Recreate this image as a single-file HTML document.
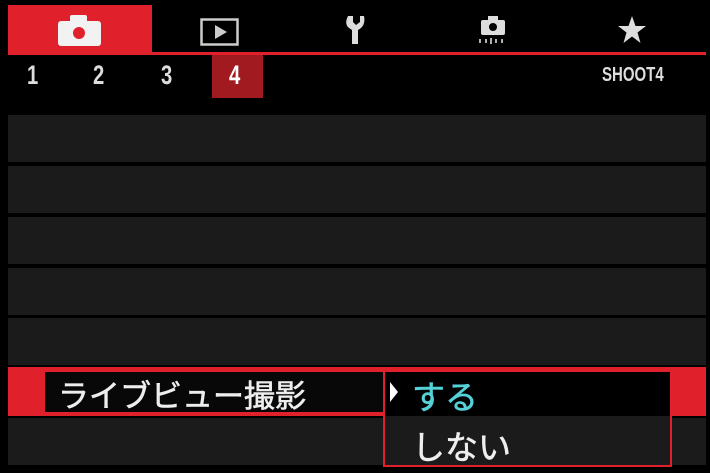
<!DOCTYPE html><html><head><style>
body{margin:0;width:710px;height:473px;background:#000;position:relative;overflow:hidden;font-family:"Liberation Sans","Noto Sans CJK JP",sans-serif;color:#eee}
div{position:absolute}
.row{left:8px;width:698px;height:47px;background:#1b1b1b}
.n{top:60px;font-size:27px;font-weight:bold;color:#ddd;transform:scaleX(.75);transform-origin:left}
</style></head><body>
<div style="left:8px;top:5px;width:144px;height:48px;background:#e0202a"></div>
<div style="left:8px;top:52px;width:698px;height:3px;background:#e0202a"></div>
<svg style="position:absolute;left:58px;top:14px" width="44" height="33"><rect x="0" y="7" width="43" height="25" rx="3" fill="#f2f2f2"/><rect x="12" y="1" width="17" height="9" rx="2" fill="#f2f2f2"/><circle cx="21" cy="19" r="6" fill="#e0202a"/></svg>
<svg style="position:absolute;left:200px;top:18px" width="40" height="28"><rect x="1.5" y="1.5" width="36" height="25" fill="none" stroke="#ccc" stroke-width="2.5"/><path d="M15 7 L27 14 L15 21Z" fill="#ccc"/></svg>
<svg style="position:absolute;left:344px;top:14px" width="26" height="32"><path d="M4 2 Q0 10 5 14 L8 16 L8 30 L14 30 L14 16 Q22 12 20 2 L16 2 L16 8 L12 11 L9 8 L9 2Z" fill="#ddd"/></svg>
<svg style="position:absolute;left:477px;top:14px" width="34" height="32"><rect x="4" y="6" width="24" height="15" rx="2" fill="#ddd"/><rect x="11" y="2" width="10" height="6" fill="#ddd"/><circle cx="16" cy="13" r="4" fill="#000"/><path d="M3 25v4M9 25v4M14 24v6M19 25v4M25 25v4" stroke="#ddd" stroke-width="1.6"/></svg>
<svg style="position:absolute;left:617px;top:15px" width="30" height="30"><path d="M15 1 L18.5 11 L29 11 L20.5 17.5 L23.5 28 L15 21.5 L6.5 28 L9.5 17.5 L1 11 L11.5 11Z" fill="#ddd"/></svg>
<div style="left:212px;top:55px;width:51px;height:43px;background:#a01a20"></div>
<div class="n" style="left:27px">1</div>
<div class="n" style="left:93px">2</div>
<div class="n" style="left:161px">3</div>
<div class="n" style="left:229px;color:#fff">4</div>
<div style="left:602px;top:64px;font-size:20px;font-weight:bold;color:#ddd;transform:scaleX(.75);transform-origin:left">SHOOT4</div>
<div class="row" style="top:115px"></div>
<div class="row" style="top:166px"></div>
<div class="row" style="top:217px"></div>
<div class="row" style="top:268px"></div>
<div class="row" style="top:318px"></div>
<div class="row" style="top:418px"></div>
<div style="left:8px;top:367px;width:698px;height:49px;background:#e0202a"></div>
<div style="left:45px;top:372px;width:340px;height:40px;background:#080808"></div>
<div style="left:383px;top:370px;width:285px;height:93px;border:2px solid #e0202a;background:#1b1b1b"></div>
<div style="left:385px;top:372px;width:285px;height:44px;background:#000"></div>
<div style="left:58px;top:371px;font-size:31px;color:#eee;-webkit-text-stroke:0.6px #eee">ライブビュー撮影</div>
<svg style="position:absolute;left:388px;top:380px" width="12" height="24"><path d="M2 2 L10 12 L2 22Z" fill="#fff"/></svg>
<div style="left:412px;top:371px;font-size:33px;color:#55d2d8;-webkit-text-stroke:0.6px #55d2d8">する</div>
<div style="left:412px;top:421px;font-size:33px;color:#eee;-webkit-text-stroke:0.6px #eee">しない</div>
</body></html>
